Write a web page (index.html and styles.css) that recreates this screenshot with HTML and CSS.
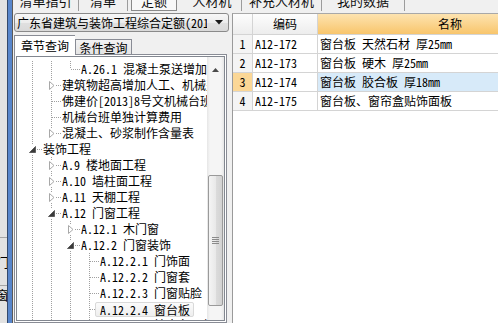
FILE: index.html
```html
<!doctype html>
<html lang='zh-CN'>
<head>
  <meta charset='utf-8'>
  <title>定额查询</title>
  <link rel="stylesheet" href="styles.css">
</head>
<body>
  <div class='edge'>
    <div class='edge-list'>
      <p class='edge-row tall'><span>门</span></p>
      <p class='edge-row'><span>窗</span></p>
    </div>
    <div class='edge-bar'></div>
  </div>

  <div class='main'>
    <nav class='toptabs'>
      <span class='toptab t1'>清单指引</span>
      <span class='toptab t2'>清单</span>
      <span class='toptab t3 current'>定额</span>
      <span class='toptab t4'>人材机</span>
      <span class='toptab t5'>补充人材机</span>
      <span class='toptab t6'>我的数据</span>
    </nav>

    <div class='work'>
      <section class='side'>
        <div class='combo'>
          <span class='combo-text'>广东省建筑与装饰工程综合定额(2010)</span>
          <span class='combo-btn'>
            <svg width='8' height='5' viewBox='0 0 8 5'><polygon points='0,0 8,0 4,4.5' fill='#1a1a1a'/></svg>
          </span>
        </div>

        <div class='tabs'>
          <span class='tab active'>章节查询</span>
          <span class='tab'>条件查询</span>
        </div>

        <div class='tabpage'>
          <div class='tree'>
            <ul class='nodes'>
              <li class='row'><i class='cell v'></i><i class='cell v'></i><i class='cell n end'></i><span class='label'>A.26.1 混凝土泵送增加费</span></li>
              <li class='row'><i class='cell v'></i><i class='cell n'><svg class='exp' width='6' height='9' viewBox='0 0 6 9'><polygon points='0.5,0.5 5,4.5 0.5,8.5' fill='#fff' stroke='#a8a8a8'/></svg></i><span class='label'>建筑物超高增加人工、机械费</span></li>
              <li class='row'><i class='cell v'></i><i class='cell n'></i><span class='label'>佛建价[2013]8号文机械台班</span></li>
              <li class='row'><i class='cell v'></i><i class='cell n'></i><span class='label'>机械台班单独计算费用</span></li>
              <li class='row'><i class='cell v'></i><i class='cell n end'><svg class='exp' width='6' height='9' viewBox='0 0 6 9'><polygon points='0.5,0.5 5,4.5 0.5,8.5' fill='#fff' stroke='#a8a8a8'/></svg></i><span class='label'>混凝土、砂浆制作含量表</span></li>
              <li class='row'><i class='cell n'><svg class='exp' width='7' height='7' viewBox='0 0 7 7'><polygon points='6.5,0.5 6.5,6.5 0.5,6.5' fill='#3a3a3a' stroke='#5c5c5c'/></svg></i><span class='label'>装饰工程</span></li>
              <li class='row'><i class='cell v'></i><i class='cell n'><svg class='exp' width='6' height='9' viewBox='0 0 6 9'><polygon points='0.5,0.5 5,4.5 0.5,8.5' fill='#fff' stroke='#a8a8a8'/></svg></i><span class='label'>A.9 楼地面工程</span></li>
              <li class='row'><i class='cell v'></i><i class='cell n'><svg class='exp' width='6' height='9' viewBox='0 0 6 9'><polygon points='0.5,0.5 5,4.5 0.5,8.5' fill='#fff' stroke='#a8a8a8'/></svg></i><span class='label'>A.10 墙柱面工程</span></li>
              <li class='row'><i class='cell v'></i><i class='cell n'><svg class='exp' width='6' height='9' viewBox='0 0 6 9'><polygon points='0.5,0.5 5,4.5 0.5,8.5' fill='#fff' stroke='#a8a8a8'/></svg></i><span class='label'>A.11 天棚工程</span></li>
              <li class='row'><i class='cell v'></i><i class='cell n'><svg class='exp' width='7' height='7' viewBox='0 0 7 7'><polygon points='6.5,0.5 6.5,6.5 0.5,6.5' fill='#3a3a3a' stroke='#5c5c5c'/></svg></i><span class='label'>A.12 门窗工程</span></li>
              <li class='row'><i class='cell v'></i><i class='cell v'></i><i class='cell n'><svg class='exp' width='6' height='9' viewBox='0 0 6 9'><polygon points='0.5,0.5 5,4.5 0.5,8.5' fill='#fff' stroke='#a8a8a8'/></svg></i><span class='label'>A.12.1 木门窗</span></li>
              <li class='row'><i class='cell v'></i><i class='cell v'></i><i class='cell n'><svg class='exp' width='7' height='7' viewBox='0 0 7 7'><polygon points='6.5,0.5 6.5,6.5 0.5,6.5' fill='#3a3a3a' stroke='#5c5c5c'/></svg></i><span class='label'>A.12.2 门窗装饰</span></li>
              <li class='row'><i class='cell v'></i><i class='cell v'></i><i class='cell v'></i><i class='cell n'></i><span class='label'>A.12.2.1 门饰面</span></li>
              <li class='row'><i class='cell v'></i><i class='cell v'></i><i class='cell v'></i><i class='cell n'></i><span class='label'>A.12.2.2 门窗套</span></li>
              <li class='row'><i class='cell v'></i><i class='cell v'></i><i class='cell v'></i><i class='cell n'></i><span class='label'>A.12.2.3 门窗贴脸</span></li>
              <li class='row'><i class='cell v'></i><i class='cell v'></i><i class='cell v'></i><i class='cell n'></i><span class='label selected'>A.12.2.4 窗台板</span></li>
              <li class='row'><i class='cell v'></i><i class='cell v'></i><i class='cell v'></i><i class='cell n'></i><span class='label'>A.12.2.5 披水条、盖口条</span></li>
            </ul>

            <div class='vscroll'>
              <span class='sb-up'>
                <svg width='7' height='4' viewBox='0 0 7 4'><polygon points='0,4 7,4 3.5,0' fill='#4a4a4a'/></svg>
              </span>
              <span class='sb-thumb'>
                <svg width='7' height='7' viewBox='0 0 7 7'><path d='M0 0.5h7M0 2.5h7M0 4.5h7M0 6.5h7' stroke='#8a8a8a'/></svg>
              </span>
            </div>
          </div>
        </div>
      </section>

      <section class='grid'>
        <div class='sheet'>
          <div class='hd num'></div>
          <div class='hd'>编码</div>
          <div class='hd sorted'>名称</div>

          <div class='num'>1</div><div class='code'>A12-172</div><div class='name'>窗台板 天然石材 厚25mm</div>
          <div class='num'>2</div><div class='code'>A12-173</div><div class='name'>窗台板 硬木 厚25mm</div>
          <div class='num cur'>3</div><div class='code'>A12-174</div><div class='name cur'>窗台板 胶合板 厚18mm</div>
          <div class='num'>4</div><div class='code'>A12-175</div><div class='name'>窗台板、窗帘盒贴饰面板</div>
        </div>
      </section>
    </div>
  </div>
</body>
</html>
```

FILE: styles.css
```css
*, html { box-sizing: border-box; }
body { margin: 0; width: 498px; height: 323px; overflow: hidden; display: flex;
       background: #f0f0f0; color: #000;
       font: 12px "Noto Sans Mono CJK SC", "Noto Sans CJK SC", sans-serif; }
p, ul { margin: 0; }

/* left window edge */
.edge { width: 13px; flex: none; display: flex; }
.edge-list { width: 7px; background: #e2e2e2; overflow: hidden; padding-top: 237px; }
.edge-row { height: 17px; display: flex; justify-content: flex-end; align-items: center;
            border-top: 1px solid #a5a5a5; white-space: nowrap; font-size: 13px; }
.edge-row.tall { height: 48px; }
.edge-row span { flex: none; margin-right: -2px; }
.edge-bar { width: 6px; background: #5886cb; border-left: 1px solid #34496b; border-right: 1px solid #5a5a5a; }

.main { flex: 1; display: flex; flex-direction: column; min-width: 0; }

/* top tabs, cut by the window */
.toptabs { height: 11px; flex: none; display: flex; overflow: hidden; line-height: 1px; font-size: 13px; color: #111; }
.toptab { flex: none; text-align: center; border-right: 1px solid #9c9c9c; }
.toptab.t1 { width: 66px; }
.toptab.t2 { width: 49px; }
.toptab.t3 { width: 55px; }
.toptab.t4 { width: 59px; }
.toptab.t5 { width: 80px; }
.toptab.t6 { width: 83px; }
.toptab.current { background: #f8f8f8; border-left: 1px solid #8a8a8a; border-right: 1px solid #8a8a8a;
                  border-bottom: 1px solid #8a8a8a; margin: 0 6px 0 3px; width: 46px; }

.work { flex: 1; display: flex; padding-top: 2px; min-height: 0; }

/* left side: book selector + chapter tree */
.side { width: 216px; flex: none; padding-left: 1px; display: flex; flex-direction: column; }
.combo { height: 19px; flex: none; display: flex; align-items: center; border: 1px solid #8a8a8a; border-radius: 3px;
         background: linear-gradient(#f7f7f7, #ececec 50%, #e0e0e0 51%, #d9d9d9); }
.combo-text { flex: 1; overflow: hidden; white-space: nowrap; padding-left: 2px; margin-right: 3px; line-height: 17px; }
.combo-btn { width: 18px; flex: none; display: flex; justify-content: center; align-items: center; }

.tabs { height: 20px; flex: none; display: flex; align-items: flex-end; margin-top: 3px; margin-bottom: -1px; }
.tab { width: 57px; height: 16px; line-height: 15px; text-align: center; border: 1px solid #898c95; border-bottom: none;
       background: linear-gradient(#f3f3f3, #e3e3e3); }
.tab.active { position: relative; width: 61px; height: 20px; line-height: 20px; background: #fff; border-right: none; }

.tabpage { flex: 1; min-height: 0; margin-right: 2px; border: 1px solid #898c95; background: #fff; padding: 1px; display: flex; }
.tree { flex: 1; min-width: 0; display: flex; border: 1px solid #828790; overflow: hidden; }
.nodes { flex: 1; min-width: 0; list-style: none; padding: 4px 0 0 6px; overflow: hidden; }
.row { height: 16px; line-height: 16px; display: flex; white-space: nowrap; }
.cell { width: 19px; height: 16px; flex: none; display: flex; justify-content: center; align-items: center; }
.cell.v { background: repeating-linear-gradient(#a0a0a0 0 1px, transparent 1px 2px) 9px 0 / 1px 16px no-repeat; }
.cell.n { background: repeating-linear-gradient(to right, #a0a0a0 0 1px, transparent 1px 2px) 10px 8px / 9px 1px no-repeat,
                      repeating-linear-gradient(#a0a0a0 0 1px, transparent 1px 2px) 9px 0 / 1px 16px no-repeat; }
.cell.n.end { background: repeating-linear-gradient(to right, #a0a0a0 0 1px, transparent 1px 2px) 10px 8px / 9px 1px no-repeat,
                          repeating-linear-gradient(#a0a0a0 0 1px, transparent 1px 2px) 9px 0 / 1px 8px no-repeat; }
.exp { display: block; background: #fff; box-sizing: content-box; padding: 1px; }
.label { padding-left: 1px; }
.label.selected { margin-left: -4px; padding: 0 3px 0 4px; line-height: 14px; height: 15px; align-self: center;
                  border: 1px solid #d9d9d9; border-radius: 2px; background: linear-gradient(#fbfbfb, #eeeeee); }

.vscroll { width: 17px; flex: none; display: flex; flex-direction: column; align-items: center;
           background: linear-gradient(to right, #e6e6e6, #f5f5f5 3px, #f5f5f5 14px, #e6e6e6); }
.sb-up { height: 17px; width: 17px; flex: none; display: flex; justify-content: center; align-items: flex-end; padding-bottom: 2px; }
.sb-thumb { width: 15px; height: 131px; flex: none; margin-top: 101px; display: flex; justify-content: center; align-items: center;
            border: 1px solid #9a9a9a; border-radius: 2px;
            background: linear-gradient(to right, #f4f4f4, #e9e9e9 50%, #dcdcdc 51%, #d2d2d2); }

/* right side: quota list */
.grid { flex: 1; min-width: 0; margin-left: 3px; background: #fff; border-left: 1px solid #9a9a9a; border-top: 1px solid #a8a8a8; overflow: hidden; }
.sheet { display: grid; grid-template-columns: 20px 65px 264px; grid-template-rows: 21px; grid-auto-rows: 19px; width: 349px; }
.sheet > div { border-right: 1px solid #d4d4d4; border-bottom: 1px solid #d4d4d4; white-space: nowrap; line-height: 18px; }
.sheet > .hd { text-align: center; line-height: 20px; background: linear-gradient(#fdfdfd, #ededed); }
.sheet > .hd.sorted { background: linear-gradient(#fde3b0, #f8c56c); border-right: none; }
.num { text-align: center; background: #f4f4f4; }
.num.cur { background: #fbd796; }
.code { padding-left: 2px; }
.name { padding-left: 2px; }
.name.cur { background: #d7eaf9; }
```
